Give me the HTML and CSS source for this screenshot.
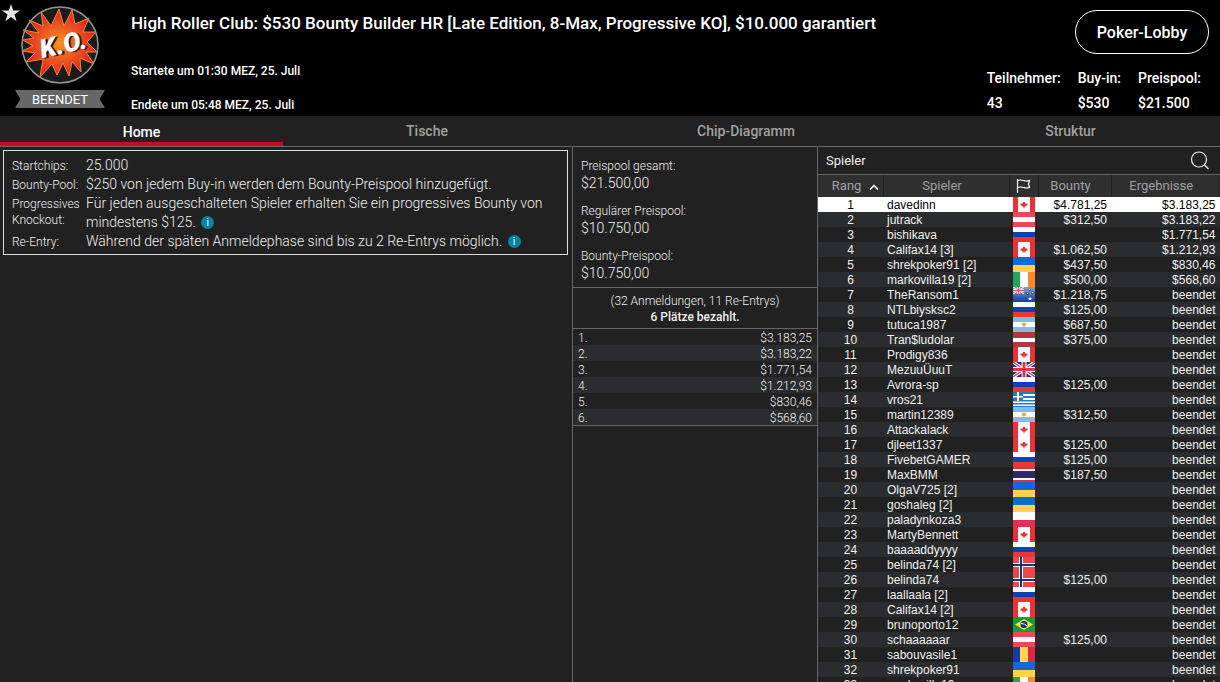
FILE: index.html
```html
<!DOCTYPE html>
<html lang="de">
<head>
  <meta charset="UTF-8">
  <meta name="viewport" content="width=device-width, initial-scale=1.0">
  <title>High Roller Club: $530 Bounty Builder HR</title>
  <link rel="stylesheet" href="styles.css">
</head>
<body>
  <!-- flags -->
  <svg class="defs" aria-hidden="true">
    <defs>
      <radialGradient id="boom"><stop offset="0" stop-color="#f7941d"/><stop offset="1" stop-color="#e01f26"/></radialGradient>
      <linearGradient id="nzBlue" x1="0" y1="0" x2="0" y2="1"><stop offset="0" stop-color="#8a9cc8"/><stop offset="1" stop-color="#123f96"/></linearGradient>
    </defs>
    <symbol id="ca" viewBox="0 0 22 15"><path fill="#ee2f36" d="M0 0h22v15H0z"/><path fill="#fff" d="M5 0h12v15H5z"/><path fill="#ee2f36" d="M10 5h2v1.500h2.500v2H13v1h-1.500V11h-1V9.500H9v-1H7.500v-2H10z"/></symbol>
    <symbol id="at" viewBox="0 0 22 15"><path fill="#ea4a58" d="M0 0h22v15H0z"/><path fill="#fff" d="M0 5h22v5H0z"/></symbol>
    <symbol id="ru" viewBox="0 0 22 15"><path fill="#fff" d="M0 0h22v5H0z"/><path fill="#0b40b4" d="M0 5h22v5H0z"/><path fill="#e33a36" d="M0 10h22v5H0z"/></symbol>
    <symbol id="ua" viewBox="0 0 22 15"><path fill="#1269d3" d="M0 0h22v8H0z"/><path fill="#fdd446" d="M0 8h22v7H0z"/></symbol>
    <symbol id="ie" viewBox="0 0 22 15"><path fill="#1fa85b" d="M0 0h7v15H0z"/><path fill="#fff" d="M7 0h8v15H7z"/><path fill="#fa8b2c" d="M15 0h7v15h-7z"/></symbol>
    <symbol id="nz" viewBox="0 0 22 15"><path fill="url(#nzBlue)" d="M0 0h22v15H0z"/><path stroke="#fff" stroke-width="1" d="M0 0l11 7M11 0L0 7"/><path stroke="#fff" stroke-width="3" d="M5.500 0v7M0 3.500h11"/><path stroke="#e8475a" stroke-width="1.500" d="M5.500 0v7M0 3.500h11"/><path fill="#fff" d="M17 10l.5 1h1.500l-1 1 .5 1.500-1.500-1-1.500 1 .5-1.500-1-1h1.500zM16 2h1v1h-1zM19 5h1v1h-1zM14 6h1v1h-1z"/></symbol>
    <symbol id="ar" viewBox="0 0 22 15"><path fill="#86b9e9" d="M0 0h22v15H0z"/><path fill="#fff" d="M0 5h22v5H0z"/><circle cx="11" cy="7.500" r="2" fill="#e6a83c"/></symbol>
    <symbol id="lv" viewBox="0 0 22 15"><path fill="#b2353f" d="M0 0h22v15H0z"/><path fill="#fff" d="M0 6h22v4H0z"/></symbol>
    <symbol id="gb" viewBox="0 0 22 15"><path fill="#1b2f8a" d="M0 0h22v15H0z"/><path stroke="#fff" stroke-width="3.500" d="M0 0l22 15M22 0L0 15"/><path stroke="#e0364a" stroke-width="1.200" d="M0 0l22 15M22 0L0 15"/><path stroke="#fff" stroke-width="5" d="M11 0v15M0 7.500h22"/><path stroke="#e0364a" stroke-width="3" d="M11 0v15M0 7.500h22"/></symbol>
    <symbol id="gr" viewBox="0 0 22 15"><path fill="#fff" d="M0 0h22v15H0z"/><path fill="#1f7bcb" d="M0 0h22v2H0zM0 4h22v2H0zM0 8h22v1.500H0zM0 11h22v1.500H0zM0 14h22v1H0zM0 0h10v9H0z"/><path fill="#fff" d="M4 0h2v9H4zM0 4h10v1.500H0z"/></symbol>
    <symbol id="th" viewBox="0 0 22 15"><path fill="#e8303c" d="M0 0h22v15H0z"/><path fill="#fff" d="M0 2h22v11H0z"/><path fill="#2e2a63" d="M0 4h22v7H0z"/></symbol>
    <symbol id="pl" viewBox="0 0 22 15"><path fill="#fff" d="M0 0h22v8H0z"/><path fill="#e32e51" d="M0 8h22v7H0z"/></symbol>
    <symbol id="no" viewBox="0 0 22 15"><path fill="#ee4548" d="M0 0h22v15H0z"/><path stroke="#fff" stroke-width="4" d="M8 0v15M0 8h22"/><path stroke="#1d2f74" stroke-width="2" d="M8 0v15M0 8h22"/></symbol>
    <symbol id="br" viewBox="0 0 22 15"><path fill="#159a36" d="M0 0h22v15H0z"/><path fill="#fae042" d="M11 2l9 5.500-9 5.500-9-5.500z"/><circle cx="11" cy="7.500" r="3.500" fill="#12336f"/><path stroke="#fff" fill="none" d="M8 6.500q4 0 6 2.500"/></symbol>
    <symbol id="ro" viewBox="0 0 22 15"><path fill="#0f3e9e" d="M0 0h7v15H0z"/><path fill="#fcd84a" d="M7 0h8v15H7z"/><path fill="#e32445" d="M15 0h7v15h-7z"/></symbol>
  </svg>

  <header class="header">
    <svg class="star" viewBox="0 0 18 18"><path fill="#e4e4e4" d="M9 0l2.200 6.500H18l-5.500 4 2.100 6.700L9 13.100l-5.600 4.100 2.100-6.700L0 6.500h6.800z"/></svg>
    <div class="badge">
      <svg class="logo" viewBox="0 0 78 78">
        <circle cx="39" cy="39" r="38" fill="#1b1b1b"/>
        <path fill="url(#boom)" stroke="#f08a28" stroke-width="1" d="M20 6L30 20 38 3 43 20 51 4 54 18 68 12 62 26 75 26 66 36 76 46 65 46 73 58 59 52 60 66 51 56 48 70 42 57 36 69 31 58 19 71 22 53 5 56 14 47 1 45 12 40 2 34 13 32 2 24 18 27 8 14 22 20z"/>
        <circle cx="39" cy="39" r="38" fill="none" stroke="#939393" stroke-width="1.500"/>
        <g class="ko" transform="rotate(-13 43 38)">
          <text x="44" y="48" fill="#381010" text-anchor="middle">K.O.</text>
          <text x="42" y="47" fill="#fff" text-anchor="middle">K.O.</text>
        </g>
      </svg>
      <span class="ribbon">BEENDET</span>
    </div>
    <div class="info">
      <h1>High Roller Club: $530 Bounty Builder HR [Late Edition, 8-Max, Progressive KO], $10.000 garantiert</h1>
      <p>Startete um 01:30 MEZ, 25. Juli</p>
      <p>Endete um 05:48 MEZ, 25. Juli</p>
    </div>
    <div class="side">
      <button type="button" class="lobby">Poker-Lobby</button>
      <dl class="stats">
        <div><dt>Teilnehmer:</dt><dd>43</dd></div>
        <div><dt>Buy-in:</dt><dd>$530</dd></div>
        <div><dt>Preispool:</dt><dd>$21.500</dd></div>
      </dl>
    </div>
  </header>

  <nav class="tabs">
    <a href="#home" class="active">Home</a>
    <a href="#tische">Tische</a>
    <a href="#chips">Chip-Diagramm</a>
    <a href="#struktur">Struktur</a>
  </nav>

  <main class="columns">
    <section class="home">
      <dl class="details">
        <dt>Startchips:</dt>
        <dd>25.000</dd>
        <dt>Bounty-Pool:</dt>
        <dd>$250 von jedem Buy-in werden dem Bounty-Preispool hinzugefügt.</dd>
        <dt>Progressives Knockout:</dt>
        <dd>Für jeden ausgeschalteten Spieler erhalten Sie ein progressives Bounty von mindestens $125. <button type="button" class="tip">i</button></dd>
        <dt>Re-Entry:</dt>
        <dd>Während der späten Anmeldephase sind bis zu 2 Re-Entrys möglich. <button type="button" class="tip">i</button></dd>
      </dl>
    </section>

    <section class="prizes">
      <dl class="pools">
        <dt>Preispool gesamt:</dt>
        <dd>$21.500,00</dd>
        <dt>Regulärer Preispool:</dt>
        <dd>$10.750,00</dd>
        <dt>Bounty-Preispool:</dt>
        <dd>$10.750,00</dd>
      </dl>
      <div class="entries">
        <p>(32 Anmeldungen, 11 Re-Entrys)</p>
        <p><b>6 Plätze bezahlt.</b></p>
      </div>
      <table class="payouts">
        <tr><td>1.</td><td>$3.183,25</td></tr>
        <tr><td>2.</td><td>$3.183,22</td></tr>
        <tr><td>3.</td><td>$1.771,54</td></tr>
        <tr><td>4.</td><td>$1.212,93</td></tr>
        <tr><td>5.</td><td>$830,46</td></tr>
        <tr><td>6.</td><td>$568,60</td></tr>
      </table>
    </section>

    <section class="players">
      <div class="players-head">
        <h2>Spieler</h2>
        <button type="button" class="search" aria-label="Suchen">
          <svg viewBox="0 0 20 20" fill="none" stroke="#eee" stroke-width="1.200"><circle cx="9" cy="8.500" r="7.500"/><path d="M14.500 14l4 4"/></svg>
        </button>
      </div>
      <table class="ranking">
        <colgroup><col class="c-rank"><col class="c-name"><col class="c-flag"><col class="c-bounty"><col></colgroup>
        <thead>
          <tr>
            <th>Rang <svg class="sort" viewBox="0 0 10 6" fill="none" stroke="#fff" stroke-width="1.500"><path d="M1 5.500l4-4 4 4"/></svg></th>
            <th>Spieler</th>
            <th><svg class="flag-head" viewBox="0 0 15 14" fill="none" stroke="#fff" stroke-width="1.200"><path d="M1.500 0v14M1.500 1.500q3-1 6 0t6 0l-1 3.500 1 3.500q-3 1-6 0t-6 0"/></svg></th>
            <th>Bounty</th>
            <th>Ergebnisse</th>
          </tr>
        </thead>
        <tbody id="rows"></tbody>
      </table>
    </section>
  </main>

  <script>
    // name, flag, bounty, result
    const players = [
      ['davedinn', 'ca', '$4.781,25', '$3.183,25'],
      ['jutrack', 'at', '$312,50', '$3.183,22'],
      ['bishikava', 'ru', '', '$1.771,54'],
      ['Califax14 [3]', 'ca', '$1.062,50', '$1.212,93'],
      ['shrekpoker91 [2]', 'ua', '$437,50', '$830,46'],
      ['markovilla19 [2]', 'ie', '$500,00', '$568,60'],
      ['TheRansom1', 'nz', '$1.218,75'],
      ['NTLbiysksc2', 'ru', '$125,00'],
      ['tutuca1987', 'ar', '$687,50'],
      ['Tran$ludolar', 'lv', '$375,00'],
      ['Prodigy836', 'ca', ''],
      ['MezuuÜuuT', 'gb', ''],
      ['Avrora-sp', 'ru', '$125,00'],
      ['vros21', 'gr', ''],
      ['martin12389', 'ar', '$312,50'],
      ['Attackalack', 'ca', ''],
      ['djleet1337', 'ca', '$125,00'],
      ['FivebetGAMER', 'ru', '$125,00'],
      ['MaxBMM', 'th', '$187,50'],
      ['OlgaV725 [2]', 'ua', ''],
      ['goshaleg [2]', 'ua', ''],
      ['paladynkoza3', 'pl', ''],
      ['MartyBennett', 'ca', ''],
      ['baaaaddyyyy', 'ru', ''],
      ['belinda74 [2]', 'no', ''],
      ['belinda74', 'no', '$125,00'],
      ['laallaala [2]', 'ru', ''],
      ['Califax14 [2]', 'ca', ''],
      ['brunoporto12', 'br', ''],
      ['schaaaaaar', 'at', '$125,00'],
      ['sabouvasile1', 'ro', ''],
      ['shrekpoker91', 'ua', ''],
      ['markovilla19', 'ie', '']
    ];

    document.getElementById('rows').innerHTML = players.map(([name, flag, bounty, result], i) => `
      <tr>
        <td>${i + 1}</td>
        <td>${name}</td>
        <td><svg class="flag"><use href="#${flag}"/></svg></td>
        <td>${bounty}</td>
        <td>${result || 'beendet'}</td>
      </tr>`).join('');
  </script>
</body>
</html>
```
FILE: styles.css
```css
* { box-sizing: border-box; }
body { margin: 0; height: 100vh; display: flex; flex-direction: column; overflow: hidden; background: #212121; color: #f0f0f0; font-family: Roboto, Arial, sans-serif; }
h1, h2, p, dl, dd { margin: 0; }
button { padding: 0; border: none; background: none; color: inherit; font-family: inherit; cursor: pointer; }
table { border-collapse: collapse; width: 100%; }
.defs { position: absolute; width: 0; height: 0; }

/* header */
.header { position: relative; display: flex; flex: none; height: 116px; background: #000; color: #fff; font-weight: 500; }
.star { position: absolute; left: 2px; top: 4px; width: 18px; height: 18px; }
.badge { display: flex; flex-direction: column; align-items: center; gap: 6px; width: 90px; margin: 6px 26px 0 15px; }
.logo { width: 78px; height: 78px; }
.ko { font: italic 900 26px Roboto, Arial, sans-serif; }
.ribbon { width: 100%; padding-top: 1px; background: #666; font-size: 13px; font-weight: 400; line-height: 17px; text-align: center; clip-path: polygon(0 0, 100% 0, 94% 50%, 100% 100%, 0 100%, 6% 50%); }
.info { flex: 1; padding-top: 12px; white-space: nowrap; }
.info h1 { margin-bottom: 27px; font-size: 17px; font-weight: 500; line-height: 22px; }
.info p { margin-bottom: 14px; font-size: 12px; line-height: 20px; }
.side { display: flex; flex-direction: column; align-items: flex-end; padding: 10px 11px 0 0; }
.lobby { width: 134px; height: 44px; border: 1px solid #fff; border-radius: 22px; font-size: 16px; font-weight: 500; }
.stats { display: flex; gap: 17px; padding-right: 8px; margin-top: 12px; font-size: 14px; line-height: 25px; }

/* tabs */
.tabs { display: flex; flex: none; height: 31px; border-bottom: 1px solid #666; }
.tabs a { height: 30px; color: #a0a0a0; font-size: 14px; font-weight: 500; line-height: 30px; text-align: center; text-decoration: none; }
.tabs a:nth-child(1) { flex: 283; }
.tabs a:nth-child(2) { flex: 288; }
.tabs a:nth-child(3) { flex: 350; }
.tabs a:nth-child(4) { flex: 299; }
.tabs a.active { color: #fff; border-bottom: 4px solid #d00426; line-height: 32px; }

.columns { display: grid; flex: 1; grid-template-columns: 1fr 245px 403px; min-height: 0; font-weight: 300; }

/* left */
.home { padding: 3px 4px 0 3px; }
.details { display: grid; grid-template-columns: 74px 1fr; padding: 5px 8px 3px; border: 1px solid #ddd; }
.details dt { font-size: 12px; line-height: 16px; padding-top: 2px; }
.details dd { font-size: 14px; line-height: 19px; }
.tip { width: 13px; height: 13px; margin-left: 2px; border-radius: 50%; background: #0a84a0; color: #fff; font-size: 10px; line-height: 13px; text-align: center; vertical-align: 1px; }

/* middle */
.prizes { border-left: 1px solid #666; }
.pools { padding: 11px 8px 4px; }
.pools dt { font-size: 12px; line-height: 17px; }
.pools dd { margin-bottom: 11px; font-size: 14px; line-height: 17px; }
.pools dd:last-child { margin-bottom: 0; }
.entries { padding: 5px 0 3px; border: solid #666; border-width: 1px 0; margin-top: 1px; font-size: 12px; line-height: 16px; text-align: center; }
.entries b { font-weight: 500; }
.payouts { border-bottom: 1px solid #666; font-size: 12px; line-height: 14px; }
.payouts td { padding: 2px 5px 0; }
.payouts td:last-child { text-align: right; }
.payouts tr:nth-child(even) { background: #2b2c2e; }

/* right */
.players { border-left: 1px solid #666; overflow: hidden; }
.players-head { display: flex; align-items: center; justify-content: space-between; height: 28px; padding: 0 10px 0 8px; border-bottom: 1px solid #666; }
.players-head h2 { font-size: 13px; font-weight: 400; }
.search, .search svg { display: block; width: 20px; height: 20px; }
.ranking { table-layout: fixed; font: 12px/13px "Liberation Sans", Arial, sans-serif; }
.c-rank { width: 65px; }
.c-name { width: 126px; }
.c-flag { width: 29px; }
.c-bounty { width: 73px; }
.ranking th { height: 22px; padding: 0 8px 0 0; border-right: 1px solid #212121; background: #2f2f30; color: #a0a0a0; font: 400 13px/20px Roboto, Arial, sans-serif; }
.ranking th:nth-child(1) { padding: 0 0 0 10px; }
.ranking th:nth-child(3) { padding: 0; }
.ranking td { height: 15px; padding: 2px 4px 0; white-space: nowrap; }
.ranking td:nth-child(1) { text-align: center; }
.ranking td:nth-child(3) { padding: 0; }
.ranking td:nth-child(4), .ranking td:nth-child(5) { text-align: right; }
.ranking tbody tr:nth-child(even) { background: #2b2c2e; }
.ranking tbody tr:first-child { background: #fff; color: #000; }
.sort { width: 10px; height: 6px; margin-left: 4px; }
.flag-head { display: block; width: 15px; height: 14px; margin: 0 auto; }
.flag { display: block; width: 22px; height: 15px; margin: 0 auto; }
```
